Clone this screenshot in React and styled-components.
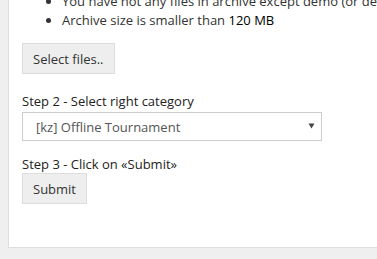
import React from 'react';
import styled, { createGlobalStyle } from 'styled-components';

const GlobalStyle = createGlobalStyle`
  html, body {
    margin: 0;
    padding: 0;
    background: #efefef;
    overflow: hidden;
  }
  body {
    font-family: 'Open Sans', 'DejaVu Sans', sans-serif;
    font-size: 13px;
    color: #333;
  }
`;

const Page = styled.div`
  height: 259px;
  padding-left: 8px;
`;

const Panel = styled.div`
  margin-top: -8px;
  background: #fff;
  border-left: 1px solid #ddd;
  border-bottom: 1px solid #ddd;
  padding: 0 0 43px 13px;
`;

const Rules = styled.ul`
  margin: 0;
  padding-left: 40px;
  line-height: 19px;
  white-space: nowrap;

  b {
    font-weight: normal;
    color: #000;
  }
`;

const Button = styled.button`
  display: block;
  height: 31px;
  margin-top: ${p => p.$gap || 0}px;
  padding: 0 10px;
  background: #eee;
  border: 1px solid #ddd;
  border-radius: 0;
  font-family: inherit;
  font-size: 13px;
  color: #333;
`;

const Label = styled.div`
  margin-top: ${p => p.$gap}px;
  line-height: 17px;
  color: #222;
`;

const SelectWrap = styled.div`
  position: relative;
  width: 300px;
  margin-top: 2px;
`;

const Select = styled.select`
  display: block;
  width: 300px;
  height: 29px;
  appearance: none;
  background: #fff;
  border: 1px solid #ccc;
  border-radius: 0;
  padding: 0 0 0 13px;
  font-family: inherit;
  font-size: 13px;
  color: #555;
`;

const Arrow = styled.svg`
  position: absolute;
  right: 7px;
  top: 11px;
  pointer-events: none;
`;

export default function App() {
  return (
    <Page>
      <GlobalStyle />
      <Panel>
        <Rules>
          <li>You have not any files in archive except demo (or demo in archives)</li>
          <li>Archive size is smaller than <b>120 MB</b></li>
        </Rules>
        <Button $gap={13}>Select files..</Button>
        <Label $gap={19}>Step 2 - Select right category</Label>
        <SelectWrap>
          <Select defaultValue="kz-offline">
            <option value="kz-offline">[kz] Offline Tournament</option>
          </Select>
          <Arrow width="7" height="6" viewBox="0 0 7 6">
            <path d="M0.5 0.5 H6.5 L3.5 5.5 Z" fill="#444" />
          </Arrow>
        </SelectWrap>
        <Label $gap={15}>Step 3 - Click on «Submit»</Label>
        <Button>Submit</Button>
      </Panel>
    </Page>
  );
}
